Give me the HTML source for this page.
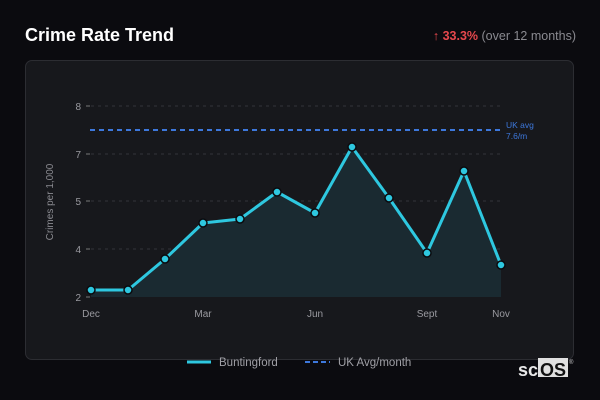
<!DOCTYPE html>
<html><head><style>
body{margin:0;width:600px;height:400px;background:#0b0b0f;font-family:"Liberation Sans","DejaVu Sans",sans-serif;overflow:hidden;position:relative}
.t{position:absolute;left:25px;top:25px;color:#fff;font-size:18px;font-weight:bold;font-family:"Liberation Sans",sans-serif;letter-spacing:0}
.r{position:absolute;right:24px;top:29px;font-size:12.5px;color:#8a8a90}
.r b{color:#e5484d}
.card{position:absolute;left:25px;top:60px;width:549px;height:300px;background:#17181c;border:1px solid #2c2d32;border-radius:7px;box-sizing:border-box}
svg{position:absolute;left:0;top:0}
</style></head><body>
<div class="t">Crime Rate Trend</div>
<div class="r"><b>↑ 33.3%</b> (over 12 months)</div>
<div class="card"></div>
<svg width="600" height="400" font-family="Liberation Sans, DejaVu Sans, sans-serif">
<g stroke="#33343a" stroke-dasharray="3,4" stroke-width="1">
<line x1="91" y1="106" x2="500" y2="106"/><line x1="91" y1="154" x2="500" y2="154"/><line x1="91" y1="201" x2="500" y2="201"/><line x1="91" y1="249" x2="500" y2="249"/>
</g>
<g stroke="#777" stroke-width="1"><line x1="86" y1="106" x2="90" y2="106"/><line x1="86" y1="154" x2="90" y2="154"/><line x1="86" y1="201" x2="90" y2="201"/><line x1="86" y1="249" x2="90" y2="249"/><line x1="86" y1="297" x2="90" y2="297"/></g>
<g fill="#9a9aa0" font-size="10" text-anchor="end"><text x="81" y="110">8</text><text x="81" y="158">7</text><text x="81" y="205">5</text><text x="81" y="253">4</text><text x="81" y="301">2</text></g>
<text transform="translate(53,202) rotate(-90)" fill="#8a8a90" font-size="10" text-anchor="middle">Crimes per 1,000</text>
<polygon fill="#1a2a31" points="91,297 91,290 128,290 165,259 203,223 240,219 277,192 315,213 352,147 389,198 427,253 464,171 501,265 501,297"/>
<line x1="90" y1="130" x2="500" y2="130" stroke="#3d78dc" stroke-width="2" stroke-dasharray="5,4"/>
<text x="506" y="128" fill="#3d78dc" font-size="8.5">UK avg</text><text x="506" y="139" fill="#3d78dc" font-size="8.5">7.6/m</text>
<polyline fill="none" stroke="#2ec8e0" stroke-width="3" stroke-linejoin="round" points="91,290 128,290 165,259 203,223 240,219 277,192 315,213 352,147 389,198 427,253 464,171 501,265"/>
<g fill="#2ec8e0" stroke="#0b0b0f" stroke-width="1.5">
<circle cx="91" cy="290" r="4"/><circle cx="128" cy="290" r="4"/><circle cx="165" cy="259" r="4"/><circle cx="203" cy="223" r="4"/><circle cx="240" cy="219" r="4"/><circle cx="277" cy="192" r="4"/><circle cx="315" cy="213" r="4"/><circle cx="352" cy="147" r="4"/><circle cx="389" cy="198" r="4"/><circle cx="427" cy="253" r="4"/><circle cx="464" cy="171" r="4"/><circle cx="501" cy="265" r="4"/>
</g>
<g fill="#9a9aa0" font-size="10" text-anchor="middle"><text x="91" y="317">Dec</text><text x="203" y="317">Mar</text><text x="315" y="317">Jun</text><text x="427" y="317">Sept</text><text x="501" y="317">Nov</text></g>
<line x1="187" y1="362" x2="211" y2="362" stroke="#2ec8e0" stroke-width="3"/>
<text x="219" y="366" fill="#a0a0a6" font-size="11.5">Buntingford</text>
<line x1="305" y1="362" x2="330" y2="362" stroke="#3d78dc" stroke-width="2" stroke-dasharray="5,3"/>
<text x="338" y="366" fill="#a0a0a6" font-size="11.5">UK Avg/month</text>
<rect x="538" y="358" width="30" height="19" fill="#e0e0e0"/>
<text x="518" y="376" fill="#e8e8e8" font-size="18" font-weight="bold">sc</text>
<text x="540" y="376" fill="#111" font-size="18" font-weight="bold">OS</text>
<text x="569" y="364" fill="#ccc" font-size="6">®</text>
</svg>
</body></html>
